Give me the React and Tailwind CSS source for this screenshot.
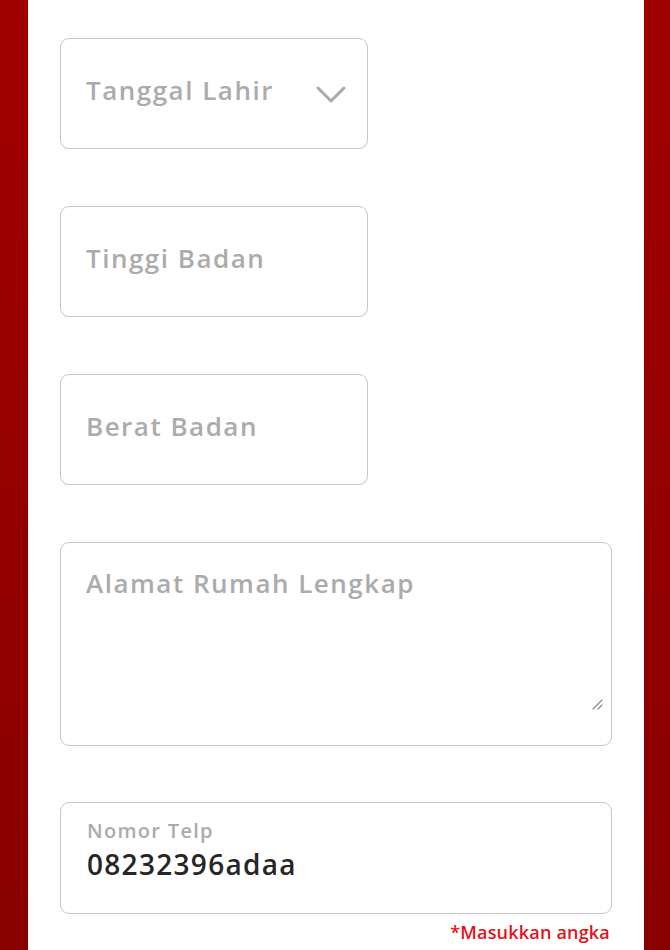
import React from "react";

const font = { fontFamily: '"Open Sans", "Noto Sans", sans-serif' };

function Box({ children, className = "" }) {
  return (
    <div className={`border-[1.5px] border-[#c6c6c6] rounded-[9px] bg-white ${className}`}>{children}</div>
  );
}

export default function App() {
  return (
    <div className="w-[670px] h-[950px] flex overflow-hidden bg-white" style={font}>
      <div className="w-[28px] shrink-0 bg-gradient-to-b from-[#a20000] to-[#880000]" />
      <div className="flex-1 bg-white flex flex-col pt-[38px] px-[32px]">
        <Box className="w-[308px] h-[111px] flex items-center justify-between pl-[25px] pr-[21px]">
          <span className="text-[26px] font-semibold text-[#ababab] tracking-[1.5px] -mt-[7px]">Tanggal Lahir</span>
          <svg width="30" height="18" viewBox="0 0 30 18" className="mt-[2px]">
            <path d="M2 2 L15 15 L28 2" fill="none" stroke="#aaaaaa" strokeWidth="3" strokeLinecap="round" strokeLinejoin="round" />
          </svg>
        </Box>
        <Box className="w-[308px] h-[111px] mt-[57px] flex items-center pl-[25px]">
          <span className="text-[26px] font-semibold text-[#ababab] tracking-[1.5px] -mt-[7px]">Tinggi Badan</span>
        </Box>
        <Box className="w-[308px] h-[111px] mt-[57px] flex items-center pl-[25px]">
          <span className="text-[26px] font-semibold text-[#ababab] tracking-[1.5px] -mt-[7px]">Berat Badan</span>
        </Box>
        <Box className="w-[552px] h-[204px] mt-[57px] relative pl-[25px] pt-[21px]">
          <span className="text-[26px] font-semibold text-[#ababab] tracking-[1.5px]">Alamat Rumah Lengkap</span>
          <svg width="12" height="12" viewBox="0 0 12 12" className="absolute right-[8px] bottom-[35px]">
            <path d="M11 2 L2 11 M11 7 L7 11" fill="none" stroke="#8a8a8a" strokeWidth="1.2" strokeLinecap="round" />
          </svg>
        </Box>
        <Box className="w-[552px] h-[112px] mt-[56px] flex flex-col pl-[26px] pt-[14px]">
          <span className="text-[20px] font-semibold text-[#ababab] leading-[28px] tracking-[1.3px]">Nomor Telp</span>
          <span className="text-[28px] font-semibold text-[#262626] leading-[38px] tracking-[1.3px]">08232396adaa</span>
        </Box>
        <div className="w-[552px] flex justify-end mt-[5px] pr-[2px]">
          <span className="text-[18px] font-semibold text-[#e3121b] leading-[26px] tracking-[0.2px]">*Masukkan angka</span>
        </div>
      </div>
      <div className="w-[28px] shrink-0 bg-gradient-to-b from-[#a20000] to-[#880000]" />
    </div>
  );
}
